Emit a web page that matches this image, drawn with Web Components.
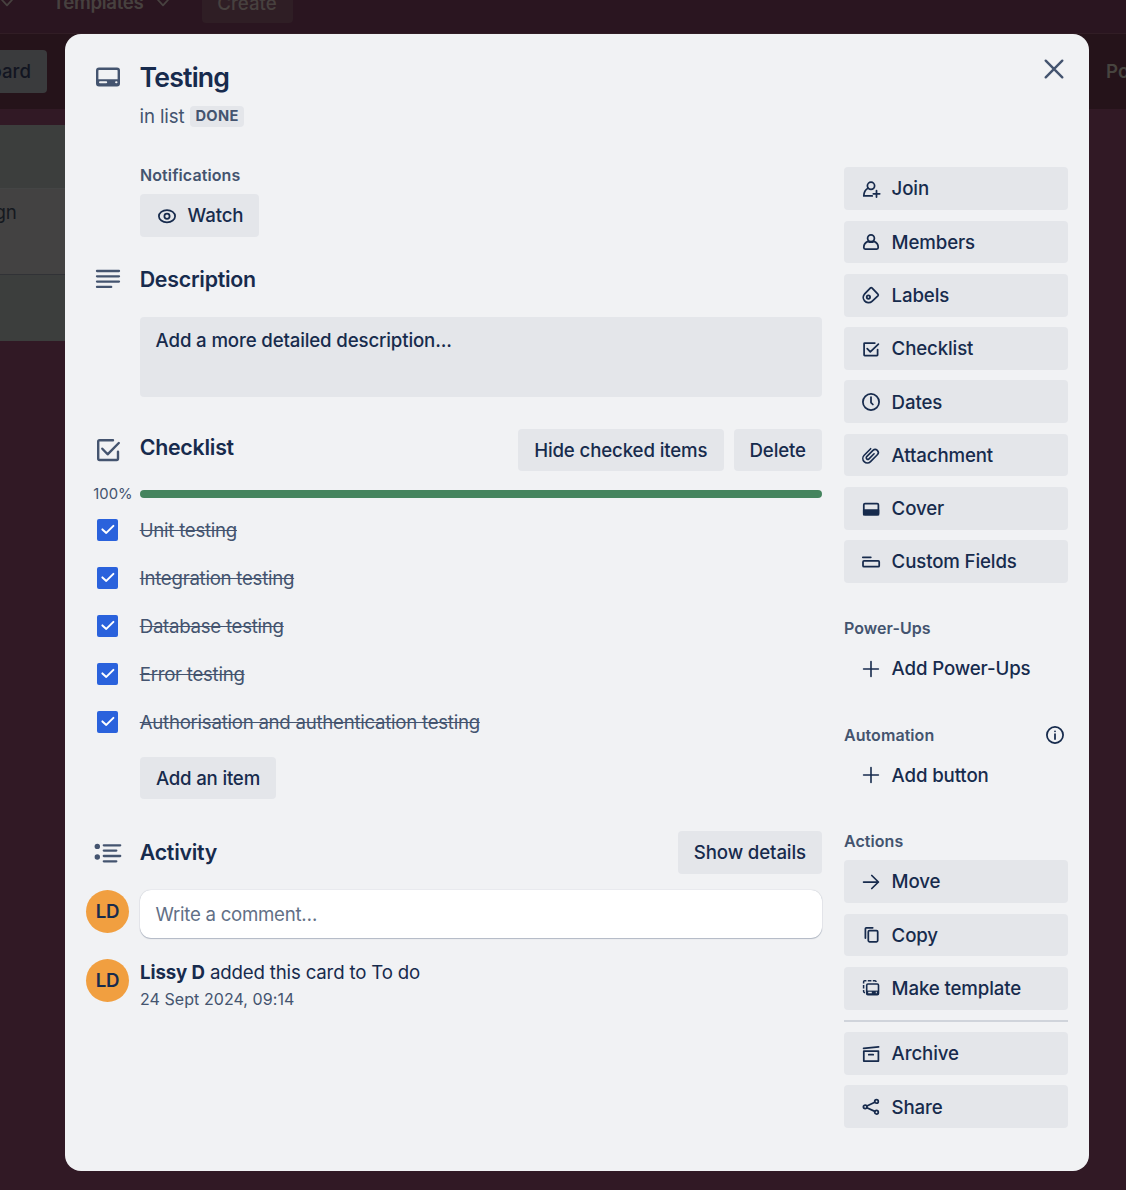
<!DOCTYPE html>
<html lang="en">
<head>
<meta charset="utf-8">
<title>Testing</title>
<style>
  html, body { margin: 0; height: 100%; overflow: hidden; }
  body { font-family: Inter, "Liberation Sans", sans-serif; color: #172b4d; background: #311925; }
</style>
</head>
<body>
<app-shell>
  <board-backdrop slot="board"></board-backdrop>
  <card-dialog slot="dialog"></card-dialog>
</app-shell>
<script>
const ICONS = {
  join: '<circle cx="0" cy="-3.2" r="3.6"/><path d="M-3-.8C-5.6.5-7.1 3-7.2 6.9H1.2M5.5 1.6v6.4M2.3 4.8h6.4"/>',
  members: '<circle cx="0" cy="-3.8" r="3.4"/><path d="M-3.2-.6C-5.8.6-7.2 2.6-7.2 5.4Q-7.2 7-5.8 7H5.8Q7.2 7 7.2 5.4C7.2 2.6 5.8.6 3.2-.6Q0 1 -3.2-.6Z"/>',
  labels: '<path d="M-6.3-1.2L-.5-7.1Q.2-7.8.9-7.1L6.9-.8Q7.7 0 6.9.8L1 6.4C-1.2 8.4-4.6 8-6.4 5.9C-8.2 3.8-8.2.8-6.3-1.2Z"/><circle cx="-2.6" cy="2.1" r="1.7"/>',
  checklist: '<path d="M3.8-6H-6.3Q-6.9-6-6.9-5.4V6Q-6.9 6.6-6.3 6.6H6Q6.6 6.6 6.6 6V.6M-3.8-.4L-.7 2.8L7.4-4.9"/>',
  dates: '<circle cx="0" cy="0" r="8.1"/><path d="M0-4.9V.6L1.9 2.5"/>',
  attachment: '<g transform="translate(-.6 .5) rotate(45)" stroke-width="1.6"><path d="M-4.6-5V4.2A4.5 4.5 0 0 0 4.4 4.2V-5.4A3.1 3.1 0 0 0-1.8-5.4V3.4A1.6 1.6 0 0 0 1.4 3.4V-3.8"/></g>',
  cover: '<rect x="-7.2" y="-5.5" width="14.6" height="11.2" rx="1.2"/><path d="M-7.2 1H7.4V5.7H-7.2Z" fill="currentColor"/>',
  fields: '<path d="M-8.2-4.7h8"/><rect x="-8" y="-1.1" width="16.2" height="5.8" rx="1"/>',
  plus: '<path d="M0-7.4V7.4M-7.4 0H7.4" stroke-width="1.6"/>',
  info: '<circle cx="0" cy="0" r="8.1"/><path d="M0-1V4.1"/><circle cx="0" cy="-3.7" r=".9" fill="currentColor" stroke="none"/>',
  move: '<path d="M-7.4 0H7.4M.8-6.5L7.4 0L.8 6.5"/>',
  copy: '<path d="M-5.6 3V-6.3Q-5.6-7.2-4.7-7.2H1.7"/><rect x="-2.7" y="-4.4" width="9.4" height="11.2" rx="1.2"/>',
  template: '<rect x="-4.3" y="-4" width="11.8" height="10.6" rx="1.2" stroke-width="1.6"/><path d="M-4.3 2.6H7.5V6.6H-4.3Z" fill="currentColor" stroke="none"/><path d="M-2.8 4.4H.8M4.8 4.4h1" stroke="#e4e6ea" stroke-width="1.5" stroke-linecap="butt"/><path stroke-linecap="butt" stroke-width="1.5" d="M-7.4-4.6V-6.2Q-7.4-7.2-6.4-7.2H-4.6M-3.2-7.2H.4M1.8-7.2H4Q5-7.2 5.1-6M-7.4-3V.6M-7.4 2V3.6Q-7.4 4.6-6 4.8"/>',
  archive: '<path d="M-7.4-5.6L7.6-7.1M-7.2-3V7.1H7.4V-3Z M-2.2.7h4.4"/>',
  share: '<circle cx="-5.8" cy="-.2" r="1.8"/><circle cx="5.5" cy="-5.6" r="1.8"/><circle cx="5.5" cy="5.2" r="1.8"/><path d="M-4.1-1L3.8-4.8M-4.1.7L3.8 4.4"/>',
  watch: '<ellipse cx="0" cy=".2" rx="8.1" ry="6.1"/><circle cx="0" cy=".2" r="2.6"/>',
  card: '<g stroke-width="2.4"><rect x="-10.8" y="-8.2" width="21.6" height="16.4" rx="1.8"/></g><path d="M-11 2.2H11V7Q11 8.6 9.4 8.6H-9.4Q-11 8.6-11 7Z" fill="currentColor" stroke="none"/><path d="M-8 5.3H-1.8M8.1 5.3h.4" stroke="#f1f2f4" stroke-width="2"/>',
  lines: '<path stroke-width="2.3" d="M-11-8H11M-11-2.7H11M-11 2.6H11M-11 7.9H3.2"/>',
  bigcheck: '<path stroke-width="2.4" d="M5-9.8H-8.4Q-9.8-9.8-9.8-8.4V8.6Q-9.8 10-8.4 10H8.6Q10 10 10 8.6V1.6M-5.7-1.3L-.4 4.3L10.8-7"/>',
  activity: '<circle cx="-10.7" cy="-6.6" r="2.7" fill="currentColor" stroke="none"/><circle cx="-10.7" cy="4" r="2.7" fill="currentColor" stroke="none"/><path stroke-width="2.3" d="M-4.2-7.7H12.2M-4.2-2.4H8.3M-4.2 3H12.2M-4.2 8.3H8.3"/>',
  tick: '<path stroke-width="2" d="M-5.6-.6L-1.7 2.9L5.4-4.1"/>',
  close: '<path stroke-width="2.4" d="M-8.3-8.3L8.3 8.3M8.3-8.3L-8.3 8.3"/>',
  down: '<path stroke-width="1.8" d="M-5-3L0 2.4L5-3"/>'
};

function define(name, template) {
  customElements.define(name, class extends HTMLElement {
    constructor() {
      super();
      this.attachShadow({ mode: "open" }).innerHTML =
        typeof template === "function" ? template(this) : template;
    }
  });
}

define("ui-icon", el => {
  const s = Number(el.getAttribute("size") || 22);
  return `<style>
    :host { display: inline-flex; flex: none; width: ${s}px; height: ${s}px; }
    svg { display: block; overflow: visible; }
  </style>
  <svg width="${s}" height="${s}" viewBox="${-s / 2} ${-s / 2} ${s} ${s}" fill="none" stroke="currentColor"
    stroke-width="1.75" stroke-linecap="round" stroke-linejoin="round">${ICONS[el.getAttribute("name")]}</svg>`;
});

define("ui-button", el => `<style>
    :host { display: flex; align-items: center; box-sizing: border-box; height: 42.67px; padding: .5px 16.1px 0 15.9px;
      border-radius: 4px; background: #e4e6ea; color: #172b4d; font-size: 18.67px; font-weight: 500;
      letter-spacing: -0.13px; white-space: nowrap; }
    :host([icon]) { padding: .5px 15.8px 0 15.7px; }
    :host([ghost]) { background: none; }
    ui-icon { margin-right: 9.9px; }
  </style>
  ${el.getAttribute("icon") ? `<ui-icon name="${el.getAttribute("icon")}"></ui-icon>` : ""}<slot></slot>`);

define("ui-avatar", `<style>
    :host { display: flex; align-items: center; justify-content: center; width: 43px; height: 43px;
      border-radius: 50%; background: #f19f40; color: #172b4d; font-size: 18.67px; font-weight: 600; letter-spacing: -.3px; }
  </style><slot></slot>`);

define("card-row", `<style>
    :host { display: grid; grid-template-columns: 43px 682px; column-gap: 11px; }
    .lead { display: flex; justify-content: center; align-items: flex-start; color: #44546f; }
  </style>
  <div class="lead"><slot name="lead"></slot></div><div><slot></slot></div>`);

define("row-heading", `<style>
    :host { display: flex; align-items: flex-start; gap: 10px; height: 42.67px; }
    .t { flex: 1; font-size: 21.33px; font-weight: 600; line-height: 32px; letter-spacing: -.24px; margin-left: -.3px; }
  </style>
  <div class="t"><slot></slot></div><slot name="actions"></slot>`);

define("check-item", `<style>
    :host { display: grid; grid-template-columns: 43px 1fr; column-gap: 11px; height: 48px; }
    .box { margin: 0 auto; width: 21.33px; height: 21.33px; border-radius: 2px; background: #2a62dc; color: #fff;
      display: flex; align-items: center; justify-content: center; }
    .t { font-size: 18.67px; line-height: 24.6px; color: #44546f; text-decoration: line-through; letter-spacing: -.27px; margin-left: -.3px; }
  </style>
  <div class="box"><ui-icon name="tick"></ui-icon></div><div class="t"><slot></slot></div>`);

define("progress-row", `<style>
    :host { display: flex; align-items: center; height: 20px; }
    .n { width: 46.5px; margin-right: 7.5px; text-align: right; font-size: 14.8px; color: #44546f; }
    .bar { flex: none; width: 682px; height: 8px; border-radius: 4px; background: #45845e; }
  </style>
  <div class="n"><slot></slot></div><div class="bar"></div>`);

define("side-section", el => `<style>
    :host { display: flex; flex-direction: column; gap: 10.65px; }
    :host([label]) { margin-top: 32px; }
    .h { display: flex; align-items: center; justify-content: space-between; height: 26px; margin-bottom: -4.66px;
      padding-right: 2.5px; font-size: 16px; font-weight: 600; color: #44546f; letter-spacing: .06px; }
    .h ui-icon { color: #172b4d; }
  </style>
  ${el.getAttribute("label") ? `<div class="h"><span>${el.getAttribute("label")}</span>${el.hasAttribute("info") ? '<ui-icon name="info"></ui-icon>' : ""}</div>` : ""}
  <slot></slot>`);

define("card-main", `<style>
    :host { display: block; width: 736px; }
    .label { font-size: 16px; font-weight: 600; line-height: 16px; color: #44546f; letter-spacing: .1px; height: 27px; }
    .watch { display: inline-flex; }
    .desc { height: 80px; box-sizing: border-box; padding: 10px 15.6px; border-radius: 4px; background: #e4e6ea;
      font-size: 18.67px; font-weight: 500; line-height: 27px; letter-spacing: -.15px; }
    .btn { display: inline-flex; letter-spacing: -.2px; }
    .comment { height: 48px; border-radius: 11px; background: #fff; box-shadow: 0 1px 1px #091e4240, 0 0 1px #091e424f;
      padding-left: 15.6px; display: flex; align-items: center; font-size: 18.67px; color: #626f86; letter-spacing: -.28px; }
    .log { font-size: 18.67px; line-height: 27px; letter-spacing: -.18px; }
    .log b { font-weight: 700; letter-spacing: -.1px; }
    .date { font-size: 16px; line-height: 27px; color: #44546f; letter-spacing: .06px; }
  </style>
  <card-row>
    <div class="label">Notifications</div>
    <ui-button class="watch" icon="watch">Watch</ui-button>
  </card-row>
  <card-row style="margin-top:26px">
    <ui-icon slot="lead" name="lines" size="28" style="margin-top:2.5px"></ui-icon>
    <row-heading>Description</row-heading>
  </card-row>
  <card-row style="margin-top:11.67px"><div class="desc">Add a more detailed description...</div></card-row>
  <card-row style="margin-top:31.8px">
    <ui-icon slot="lead" name="bigcheck" size="28" style="margin-top:7.2px"></ui-icon>
    <row-heading><span style="position:relative;top:2.7px">Checklist</span>
      <ui-button slot="actions">Hide checked items</ui-button>
      <ui-button slot="actions">Delete</ui-button>
    </row-heading>
  </card-row>
  <progress-row style="margin-top:12.53px">100%</progress-row>
  <div style="margin-top:15.3px">
    <check-item>Unit testing</check-item>
    <check-item>Integration testing</check-item>
    <check-item>Database testing</check-item>
    <check-item>Error testing</check-item>
    <check-item>Authorisation and authentication testing</check-item>
  </div>
  <card-row style="margin-top:-2.5px"><ui-button class="btn">Add an item</ui-button></card-row>
  <card-row style="margin-top:32px">
    <ui-icon slot="lead" name="activity" size="28" style="margin-top:7.4px"></ui-icon>
    <row-heading><span style="position:relative;top:5px">Activity</span>
      <ui-button slot="actions">Show details</ui-button>
    </row-heading>
  </card-row>
  <card-row style="margin-top:16px">
    <ui-avatar slot="lead">LD</ui-avatar>
    <div class="comment">Write a comment…</div>
  </card-row>
  <card-row style="margin-top:21px">
    <ui-avatar slot="lead">LD</ui-avatar>
    <div class="log"><b>Lissy D</b> added this card to To do</div>
    <div class="date">24 Sept 2024, 09:14</div>
  </card-row>`);

define("card-sidebar", `<style>
    :host { display: block; width: 224px; padding-top: .28px; }
    hr { margin: 0 0 -.67px; border: 0; height: 2px; background: #d0d4db; }
  </style>
  <side-section>
    <ui-button icon="join">Join</ui-button>
    <ui-button icon="members">Members</ui-button>
    <ui-button icon="labels">Labels</ui-button>
    <ui-button icon="checklist">Checklist</ui-button>
    <ui-button icon="dates">Dates</ui-button>
    <ui-button icon="attachment">Attachment</ui-button>
    <ui-button icon="cover">Cover</ui-button>
    <ui-button icon="fields">Custom Fields</ui-button>
  </side-section>
  <side-section label="Power-Ups"><ui-button ghost icon="plus">Add Power-Ups</ui-button></side-section>
  <side-section label="Automation" info><ui-button ghost icon="plus">Add button</ui-button></side-section>
  <side-section label="Actions">
    <ui-button icon="move">Move</ui-button>
    <ui-button icon="copy">Copy</ui-button>
    <ui-button icon="template">Make template</ui-button>
    <hr>
    <ui-button icon="archive">Archive</ui-button>
    <ui-button icon="share">Share</ui-button>
  </side-section>`);

define("card-dialog", `<style>
    :host { display: block; box-sizing: border-box; width: 1024px; height: 1137px; padding: 0 21px;
      border-radius: 16px; background: #f1f2f4; }
    header { display: grid; grid-template-columns: 43px 1fr auto; column-gap: 11px; height: 133px; box-sizing: border-box; padding-top: 21px; }
    header > ui-icon { justify-self: center; color: #44546f; }
    h2 { margin: 6px 0 0 -.5px; font-size: 26.67px; line-height: 32px; font-weight: 600; letter-spacing: -.8px; }
    p { margin: 10px 0 0 -.5px; display: flex; align-items: center; height: 26px; font-size: 18.67px; color: #44546f; letter-spacing: -.12px; }
    .tag { margin-left: 5.5px; padding: .5px 5.5px 0; height: 20.5px; line-height: 21.5px; border-radius: 4px; background: #e4e6ea;
      font-size: 14.67px; font-weight: 700; letter-spacing: .3px; }
    .body { display: flex; gap: 22px; }
  </style>
  <header>
    <ui-icon name="card" size="28" style="margin-top:8px"></ui-icon>
    <div><h2>Testing</h2><p>in list <span class="tag">DONE</span></p></div>
    <ui-icon name="close" size="28"></ui-icon>
  </header>
  <div class="body"><card-main></card-main><card-sidebar></card-sidebar></div>`);

define("board-backdrop", `<style>
    :host { display: block; height: 1190px; background: #311925; font-size: 18.67px; overflow: hidden; }
    nav { height: 34px; box-sizing: border-box; border-bottom: 1px solid #311d25; background: #2a1520; display: flex; align-items: flex-start;
      color: #47413f; font-weight: 600; }
    nav .d { margin: -8px 0 0 -4px; }
    nav span { line-height: 24px; margin: -9px 8px 0 34.6px; letter-spacing: -.3px; }
    nav .c { margin: -20px 0 0 28px; height: 43px; width: 91px; border-radius: 4px; background: #2f1e25; display: flex; align-items: center;
      justify-content: center; box-sizing: border-box; padding-top: 3px; font-weight: 500; }
    .bar { height: 75px; background: #25131a; display: flex; align-items: center; justify-content: space-between; overflow: hidden; }
    .b { width: 47px; height: 43px; box-sizing: border-box; padding-right: 16px; border-radius: 0 4px 4px 0; background: #3a3b3d; color: #121521;
      display: flex; align-items: center; justify-content: flex-end; font-weight: 500; overflow: hidden; }
    .p { width: 20px; color: #47443f; font-weight: 600; overflow: hidden; white-space: nowrap; }
    .col { margin-top: 16px; width: 70px; height: 216px; box-sizing: border-box; padding-top: 63px; background: #3c3e3d; }
    .card { height: 87px; box-sizing: border-box; border-top: 1px solid #444545; border-bottom: 1px solid #313236; background: #434242;
      color: #15191f; padding-top: 12px; line-height: 24px; text-indent: -5.6px; }
    .card span { display: block; }
  </style>
  <nav><ui-icon class="d" name="down"></ui-icon><span>Templates</span><ui-icon class="d" style="margin-left:0" name="down"></ui-icon><div class="c">Create</div></nav>
  <div class="bar"><div class="b">Board</div><div class="p">Power-Ups</div></div>
  <div class="col"><div class="card"><span>gn</span></div></div>`);

define("app-shell", `<style>
    :host { display: grid; width: 1126px; height: 1190px; overflow: hidden; }
    ::slotted(*) { grid-area: 1 / 1; }
    ::slotted(card-dialog) { margin: 34px 0 0 65px; }
  </style>
  <slot name="board"></slot><slot name="dialog"></slot>`);
</script>
</body>
</html>
